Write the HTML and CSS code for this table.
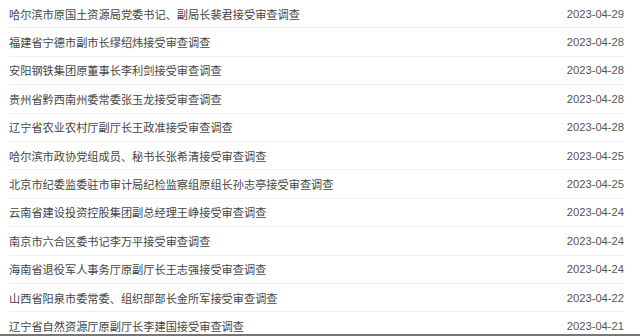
FILE: index.html
```html
<!DOCTYPE html>
<html lang="zh-CN">
<head>
<meta charset="utf-8">
<link rel="stylesheet" href="styles.css">
</head>
<body>
<ul class="news-list">
  <li class="item"><span class="title">哈尔滨市原国土资源局党委书记、副局长裴君接受审查调查</span><span class="date">2023-04-29</span></li>
  <li class="item"><span class="title">福建省宁德市副市长缪绍炜接受审查调查</span><span class="date">2023-04-28</span></li>
  <li class="item"><span class="title">安阳钢铁集团原董事长李利剑接受审查调查</span><span class="date">2023-04-28</span></li>
  <li class="item"><span class="title">贵州省黔西南州委常委张玉龙接受审查调查</span><span class="date">2023-04-28</span></li>
  <li class="item"><span class="title">辽宁省农业农村厅副厅长王政准接受审查调查</span><span class="date">2023-04-28</span></li>
  <li class="item"><span class="title">哈尔滨市政协党组成员、秘书长张希清接受审查调查</span><span class="date">2023-04-25</span></li>
  <li class="item"><span class="title">北京市纪委监委驻市审计局纪检监察组原组长孙志亭接受审查调查</span><span class="date">2023-04-25</span></li>
  <li class="item"><span class="title">云南省建设投资控股集团副总经理王峥接受审查调查</span><span class="date">2023-04-24</span></li>
  <li class="item"><span class="title">南京市六合区委书记李万平接受审查调查</span><span class="date">2023-04-24</span></li>
  <li class="item"><span class="title">海南省退役军人事务厅原副厅长王志强接受审查调查</span><span class="date">2023-04-24</span></li>
  <li class="item"><span class="title">山西省阳泉市委常委、组织部部长金所军接受审查调查</span><span class="date">2023-04-22</span></li>
  <li class="item"><span class="title">辽宁省自然资源厅原副厅长李建国接受审查调查</span><span class="date">2023-04-21</span></li>
</ul>
<div class="bottom-edge"></div>
</body>
</html>
```
FILE: styles.css
```css
html, body {
  margin: 0;
  padding: 0;
  background: #ffffff;
  overflow: hidden;
}
.news-list {
  list-style: none;
  margin: 0 16px 0 9px;
  padding: 0;
}
.item {
  display: flex;
  justify-content: space-between;
  align-items: center;
  height: 27.4px;
  border-bottom: 1px solid #eeeeee;
}
.title {
  font-family: "Noto Sans CJK SC", "Noto Sans", sans-serif;
  font-size: 11.2px;
  color: #444444;
  white-space: nowrap;
}
.date {
  font-family: "Liberation Sans", Arial, sans-serif;
  font-size: 11.2px;
  color: #555555;
}
.bottom-edge {
  position: fixed;
  left: 0;
  right: 0;
  bottom: 0;
  height: 2px;
  background: #777777;
}
```
